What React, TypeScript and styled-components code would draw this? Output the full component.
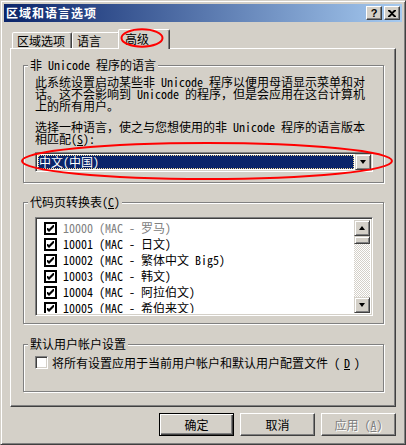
import React from "react";
import styled, { createGlobalStyle } from "styled-components";

const face = "#D4D0C8";
const shadow = "#808080";
const dark = "#404040";
const navy = "#0A246A";
const font = `"Noto Sans Mono CJK SC", "Noto Sans CJK SC", "Liberation Sans", sans-serif`;

const GlobalStyle = createGlobalStyle`
  html, body {
    margin: 0;
    padding: 0;
    background: ${face};
  }
`;

const codePages = [
  { code: "10000", name: "罗马", disabled: true },
  { code: "10001", name: "日文" },
  { code: "10002", name: "繁体中文 Big5" },
  { code: "10003", name: "韩文" },
  { code: "10004", name: "阿拉伯文" },
  { code: "10005", name: "希伯来文" },
];

export default function App() {
  return (
    <>
      <GlobalStyle />
      <Window>
        <TitleBar>
          <TitleText>区域和语言选项</TitleText>
          <TitleButton>
            <QuestionMark>?</QuestionMark>
          </TitleButton>
          <TitleButton>
            <svg width="8" height="7" viewBox="0 0 8 7">
              <path d="M0 0h2l2 2 2-2h2v1L5 3.5 8 6v1H6L4 5 2 7H0V6l3-2.5L0 1z" fill="#000" />
            </svg>
          </TitleButton>
        </TitleBar>

        <TabStrip>
          <Tab $w={60}>区域选项</Tab>
          <Tab $w={48}>语言</Tab>
          <Tab $w={48} $active>
            高级
          </Tab>
        </TabStrip>

        <Panel>
          <Group $h={124}>
            <Legend>非 Unicode 程序的语言</Legend>
            <Para $top={5}>
              此系统设置启动某些非 Unicode 程序以便用母语显示菜单和对
              <br />
              话。这不会影响到 Unicode 的程序，但是会应用在这台计算机
              <br />
              上的所有用户。
            </Para>
            <Para $top={9}>
              选择一种语言，使之与您想使用的非 Unicode 程序的语言版本
              <br />
              相匹配(<Key>S</Key>):
            </Para>
            <Combo>
              <ComboValue>中文(中国)</ComboValue>
              <RaisedButton $h={16}>
                <Arrow $down />
              </RaisedButton>
            </Combo>
          </Group>

          <Group $h={128} $top={13}>
            <Legend>
              代码页转换表(<Key>C</Key>)
            </Legend>
            <ListBox>
              <ListItems>
                {codePages.map((cp) => (
                  <ListRow key={cp.code} $disabled={cp.disabled}>
                    <ListCheck>
                      <CheckMark />
                    </ListCheck>
                    {cp.code} (MAC - {cp.name})
                  </ListRow>
                ))}
              </ListItems>
              <ScrollBar>
                <RaisedButton $h={16}>
                  <Arrow />
                </RaisedButton>
                <RaisedButton $h={8} />
                <Track />
                <RaisedButton $h={16}>
                  <Arrow $down />
                </RaisedButton>
              </ScrollBar>
            </ListBox>
          </Group>

          <Group $h={54} $top={14}>
            <Legend>默认用户帐户设置</Legend>
            <CheckRow>
              <CheckBox />
              将所有设置应用于当前用户帐户和默认用户配置文件 (<Key>D</Key>)
            </CheckRow>
          </Group>
        </Panel>

        <ButtonRow>
          <PushButton $default>确定</PushButton>
          <PushButton>取消</PushButton>
          <PushButton disabled>
            应用 (<Key>A</Key>)
          </PushButton>
        </ButtonRow>

        <Marks width="406" height="445" viewBox="0 0 406 445">
          <ellipse cx="142" cy="38" rx="20.5" ry="8.7" />
          <ellipse cx="207" cy="161" rx="185" ry="18" />
        </Marks>
      </Window>
    </>
  );
}

function CheckMark() {
  return (
    <svg width="7" height="7" viewBox="0 0 7 7">
      <path d="M0 2h1l1 1 4-4v0h1v2L2 6 0 4z" fill="#000" transform="translate(0 1)" />
    </svg>
  );
}

const Window = styled.div`
  position: relative;
  width: 406px;
  height: 445px;
  box-sizing: border-box;
  display: flex;
  flex-direction: column;
  background: ${face};
  border: 1px solid;
  border-color: ${face} ${dark} ${dark} ${face};
  box-shadow: inset 1px 1px #fff, inset -1px -1px ${shadow};
  padding: 3px;
  font-family: ${font};
  font-size: 12px;
  color: #000;
  overflow: hidden;
`;

const TitleBar = styled.div`
  flex: none;
  height: 18px;
  display: flex;
  align-items: center;
  padding: 0 2px;
  background: linear-gradient(to right, ${navy}, #a6caf0);
`;

const TitleText = styled.div`
  flex: 1;
  color: #fff;
  font-weight: bold;
  font-size: 12px;
  letter-spacing: 1px;
  line-height: 18px;
`;

const TitleButton = styled.div`
  width: 16px;
  height: 14px;
  box-sizing: border-box;
  margin-left: 2px;
  display: flex;
  align-items: center;
  justify-content: center;
  background: ${face};
  border: 1px solid;
  border-color: #fff ${dark} ${dark} #fff;
  box-shadow: inset -1px -1px ${shadow};
`;

const QuestionMark = styled.span`
  font-family: "Liberation Sans", sans-serif;
  font-weight: bold;
  font-size: 11px;
  line-height: 11px;
`;

const TabStrip = styled.div`
  flex: none;
  height: 26px;
  display: flex;
  align-items: flex-end;
  padding-left: 8px;
`;

const Tab = styled.div<{ $active?: boolean; $w: number }>`
  position: relative;
  z-index: ${(p) => (p.$active ? 2 : 0)};
  width: ${(p) => p.$w + (p.$active ? 4 : 0)}px;
  height: ${(p) => (p.$active ? 20 : 16)}px;
  margin: 0 ${(p) => (p.$active ? -2 : 0)}px ${(p) => (p.$active ? -1 : 0)}px;
  box-sizing: border-box;
  display: flex;
  align-items: center;
  padding: 0 0 ${(p) => (p.$active ? 1 : 0)}px ${(p) => (p.$active ? 6 : 4)}px;
  background: ${face};
  border: 1px solid;
  border-bottom: none;
  border-color: #fff ${dark} transparent #fff;
  border-radius: 2px 2px 0 0;
  box-shadow: inset -1px 0 ${shadow};
  line-height: 12px;
`;

const Panel = styled.div`
  flex: none;
  height: 359px;
  margin: 0 6px;
  box-sizing: border-box;
  border: 1px solid;
  border-color: #fff ${dark} ${dark} #fff;
  box-shadow: inset -1px -1px ${shadow};
  padding: 10px 11px 0 12px;
`;

const Group = styled.fieldset<{ $h: number; $top?: number }>`
  height: ${(p) => p.$h}px;
  margin: ${(p) => p.$top ?? 0}px 0 0;
  padding: 0 10px 0 11px;
  box-sizing: border-box;
  min-width: 0;
  border: 1px solid ${shadow};
  box-shadow: inset 1px 1px #fff, 1px 1px #fff;
`;

const Legend = styled.legend`
  margin-left: -7px;
  padding: 0 2px;
  line-height: 12px;
  background: ${face};
`;

const Para = styled.div<{ $top: number }>`
  margin-top: ${(p) => p.$top}px;
  line-height: 12px;
  white-space: nowrap;
`;

const Key = styled.span`
  text-decoration: underline;
`;

const sunken = `
  box-sizing: border-box;
  border: 1px solid;
  border-color: ${shadow} #fff #fff ${shadow};
  box-shadow: inset 1px 1px ${dark}, inset -1px -1px ${face};
  background: #fff;
`;

const Combo = styled.div`
  ${sunken}
  margin-top: 7px;
  height: 20px;
  display: flex;
  padding: 1px;
`;

const ComboValue = styled.div`
  flex: 1;
  margin: 1px;
  padding-left: 1px;
  display: flex;
  align-items: center;
  background: ${navy};
  color: #fff;
  outline: 1px dotted #f5db95;
  outline-offset: -1px;
  line-height: 12px;
`;

const RaisedButton = styled.div<{ $h: number }>`
  flex: none;
  width: 16px;
  height: ${(p) => p.$h}px;
  box-sizing: border-box;
  display: flex;
  align-items: center;
  justify-content: center;
  background: ${face};
  border: 1px solid;
  border-color: ${face} ${dark} ${dark} ${face};
  box-shadow: inset 1px 1px #fff, inset -1px -1px ${shadow};
`;

const Arrow = styled.span<{ $down?: boolean }>`
  width: 0;
  height: 0;
  border-left: 3.5px solid transparent;
  border-right: 3.5px solid transparent;
  ${(p) => (p.$down ? "border-top: 4px solid #000;" : "border-bottom: 4px solid #000;")}
`;

const ListBox = styled.div`
  ${sunken}
  margin-top: 9px;
  height: 99px;
  display: flex;
  padding: 2px;
  overflow: hidden;
`;

const ListItems = styled.div`
  flex: 1;
  overflow: hidden;
`;

const ListRow = styled.div<{ $disabled?: boolean }>`
  height: 16px;
  display: flex;
  align-items: center;
  gap: 6px;
  padding-left: 6px;
  white-space: nowrap;
  line-height: 12px;
  color: ${(p) => (p.$disabled ? shadow : "#000")};
`;

const ListCheck = styled.span`
  flex: none;
  width: 13px;
  height: 13px;
  box-sizing: border-box;
  display: flex;
  align-items: center;
  justify-content: center;
  border: 2px solid #000;
  background: #fff;
`;

const ScrollBar = styled.div`
  flex: none;
  width: 16px;
  display: flex;
  flex-direction: column;
`;

const Track = styled.div`
  flex: 1;
  background: repeating-conic-gradient(#fff 0 25%, ${face} 0 50%) 0 0 / 2px 2px;
`;

const CheckRow = styled.div`
  margin-top: 6px;
  display: flex;
  align-items: center;
  gap: 4px;
  line-height: 12px;
  white-space: nowrap;
`;

const CheckBox = styled.span`
  ${sunken}
  flex: none;
  width: 13px;
  height: 13px;
`;

const ButtonRow = styled.div`
  flex: none;
  display: flex;
  justify-content: flex-end;
  gap: 6px;
  margin-top: 6px;
  padding-right: 6px;
`;

const PushButton = styled.button<{ $default?: boolean }>`
  width: 75px;
  height: 23px;
  padding: 0;
  box-sizing: border-box;
  font-family: ${font};
  font-size: 12px;
  line-height: 12px;
  color: #000;
  background: ${face};
  border: 1px solid;
  border-color: ${(p) => (p.$default ? "#000" : `#fff ${dark} ${dark} #fff`)};
  box-shadow: ${(p) =>
    p.$default
      ? `inset 1px 1px #fff, inset -1px -1px ${dark}, inset -2px -2px ${shadow}`
      : `inset -1px -1px ${shadow}`};

  &:disabled {
    color: ${shadow};
    text-shadow: 1px 1px #fff;
  }
`;

const Marks = styled.svg`
  position: absolute;
  left: -1px;
  top: -1px;
  pointer-events: none;
  z-index: 5;

  ellipse {
    fill: none;
    stroke: #f00;
    stroke-width: 2;
  }
`;
